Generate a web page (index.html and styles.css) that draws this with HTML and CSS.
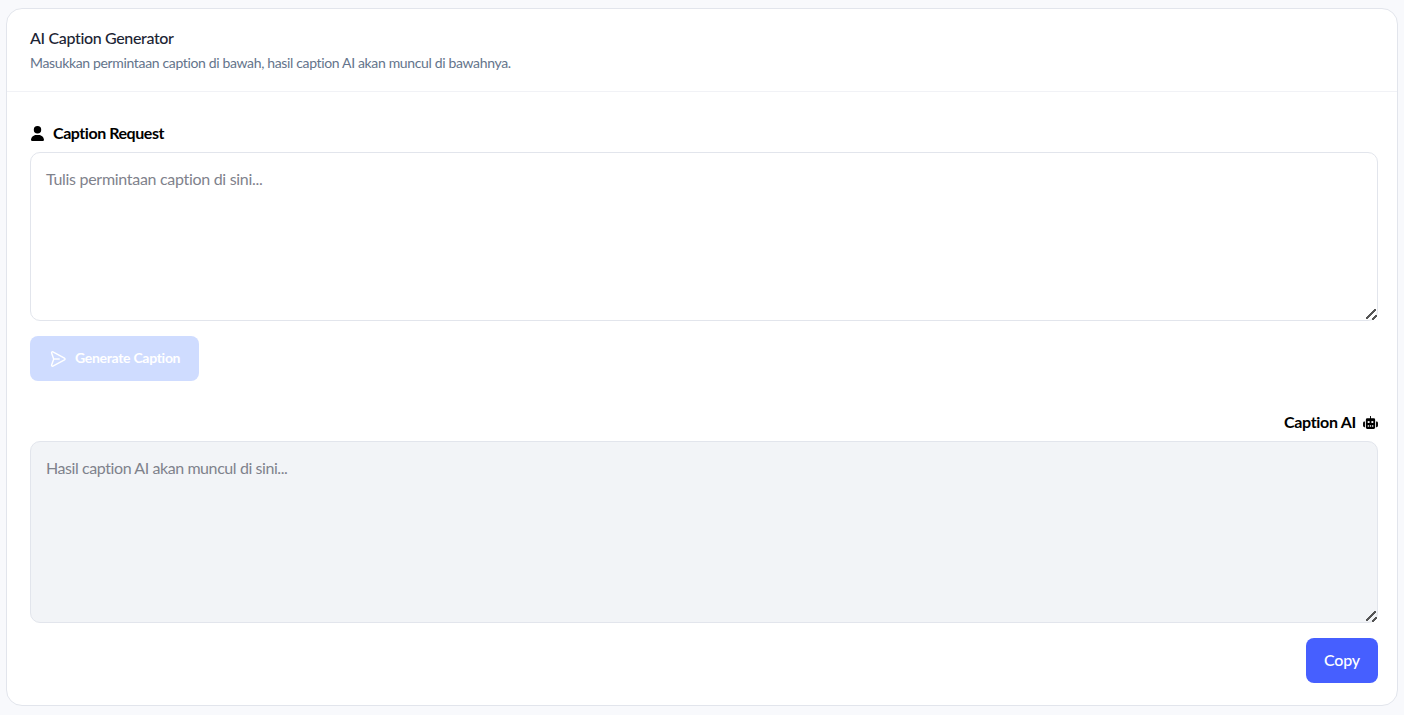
FILE: index.html
```html
<!DOCTYPE html>
<html lang="en">
<head>
    <meta charset="UTF-8">
    <meta name="viewport" content="width=device-width, initial-scale=1.0">
    <title>AI Caption Generator</title>
    <link rel="stylesheet" href="styles.css">
</head>
<body>
    <div class="card">
      <div class="card-header">
        <h4 class="card-title">AI Caption Generator</h4>
        <p class="card-desc">Masukkan permintaan caption di bawah, hasil caption AI akan muncul di bawahnya.</p>
      </div>
      <div class="card-body">
        <label class="field-label" for="request">
          <svg class="icon icon-user" viewBox="0 0 448 512" width="13" height="15"><path d="M224 256a128 128 0 1 0 0-256 128 128 0 1 0 0 256zm-45.700 48C79.800 304 0 383.800 0 482.300 0 498.700 13.300 512 29.700 512h388.600c16.400 0 29.700-13.300 29.700-29.700C448 383.800 368.200 304 269.700 304h-91.400z"/></svg>
          <span>Caption Request</span>
        </label>
        <textarea class="input input-request" id="request" placeholder="Tulis permintaan caption di sini..."></textarea>
        <button class="btn btn-generate" disabled>
          <svg class="send" viewBox="0 0 18 18" width="18" height="18" fill="none" stroke="currentColor" stroke-width="1.400" stroke-linejoin="round"><path d="M2.600 3.100c-.3-.9.500-1.600 1.300-1.200l11.600 6.200c.7.400.7 1.400 0 1.800L3.900 16.100c-.8.400-1.600-.3-1.300-1.200L4.500 9.700c.1-.4.100-.8 0-1.200z"/><path d="M4.700 9h6"/></svg>
          <span>Generate Caption</span>
        </button>
        <label class="field-label field-label-right" for="result">
          <span>Caption AI</span>
          <svg class="icon" viewBox="0 0 16 14" width="15" height="13"><path d="M7.500 0h1v2.500h3A1.500 1.500 0 0 1 13 4v8.500a1.500 1.500 0 0 1-1.500 1.500h-7A1.500 1.500 0 0 1 3 12.500V4a1.500 1.500 0 0 1 1.500-1.500h3zM1.500 6H2v6h-.5A1.500 1.500 0 0 1 0 10.500v-3A1.500 1.500 0 0 1 1.500 6zM14 6h.5A1.500 1.500 0 0 1 16 7.500v3a1.500 1.500 0 0 1-1.500 1.500H14z"/><g fill="#fff"><rect x="5" y="5.500" width="2" height="2"/><rect x="9" y="5.500" width="2" height="2"/><rect x="5" y="10" width="1.400" height="1.500"/><rect x="7.300" y="10" width="1.400" height="1.500"/><rect x="9.600" y="10" width="1.400" height="1.500"/></g></svg>
        </label>
        <textarea class="input input-result" id="result" placeholder="Hasil caption AI akan muncul di sini..." readonly></textarea>
        <div class="actions">
          <button class="btn btn-copy">Copy</button>
        </div>
      </div>
    </div>
</body>
</html>
```

FILE: styles.css
```css
* {
  box-sizing: border-box;
}

body {
  margin: 0;
  padding: 8px 6px 9px;
  background-color: #f8f9fc;
  font-family: "Lato", "Liberation Sans", sans-serif;
}

.card {
  background-color: #fff;
  border: 1px solid #e2e5ec;
  border-radius: 16px;
  height: 698px;
}

.card-header {
  height: 83px;
  padding: 19px 23px 0;
  border-bottom: 1px solid #f1f2f6;
}

.card-title {
  margin: 0;
  font-size: 16px;
  line-height: 20px;
  font-weight: 500;
  letter-spacing: -0.35px;
  color: #1c2434;
}

.card-desc {
  margin: 6px 0 0;
  font-size: 14px;
  line-height: 18px;
  letter-spacing: -0.35px;
  color: #64748b;
}

.card-body {
  padding: 31px 19px 0 23px;
}

.field-label {
  display: flex;
  align-items: center;
  gap: 9px;
  height: 20px;
  padding-bottom: 2px;
  font-size: 16px;
  font-weight: 700;
  letter-spacing: -0.45px;
  color: #000;
}

.field-label-right {
  justify-content: flex-end;
  gap: 7px;
  margin-top: 31px;
  letter-spacing: -0.3px;
}

.icon {
  fill: #000;
  flex: none;
  margin-top: 2px;
}

.icon-user {
  margin-left: 1px;
}

.input {
  display: block;
  width: 100%;
  margin: 0;
  padding: 15px 15px;
  border: 1px solid #e2e5ec;
  border-radius: 10px;
  font-family: inherit;
  font-size: 16px;
  line-height: 22px;
  outline: none;
}

.input::placeholder {
  color: #7f828c;
  opacity: 1;
}

.input::-webkit-resizer {
  background:
    linear-gradient(135deg, transparent 44%, #555 44% 56%, transparent 56%) right 1px bottom 1px / 10px 10px no-repeat,
    linear-gradient(135deg, transparent 38%, #555 38% 62%, transparent 62%) right 0.5px bottom 0.5px / 5px 5px no-repeat;
}

.input-request {
  height: 169px;
  margin-top: 9px;
  background-color: #fff;
  letter-spacing: -0.3px;
}

.input-result {
  height: 182px;
  margin-top: 9px;
  background-color: #f2f4f7;
  letter-spacing: -0.42px;
}

.btn {
  display: inline-flex;
  align-items: center;
  height: 45px;
  padding-bottom: 4px;
  border: none;
  border-radius: 8px;
  font-family: inherit;
  font-size: 14px;
  color: #fff;
}

.btn-generate {
  width: 169px;
  margin-top: 15px;
  padding-left: 19px;
  gap: 8px;
  background-color: #cfdcff;
  font-weight: 700;
  letter-spacing: -0.3px;
}

.send {
  flex: none;
  margin-top: 4px;
}

.actions {
  display: flex;
  justify-content: flex-end;
  margin-top: 15px;
}

.btn-copy {
  width: 72px;
  justify-content: center;
  background-color: #465fff;
  font-size: 16px;
  font-weight: 500;
  letter-spacing: -0.2px;
}
```
